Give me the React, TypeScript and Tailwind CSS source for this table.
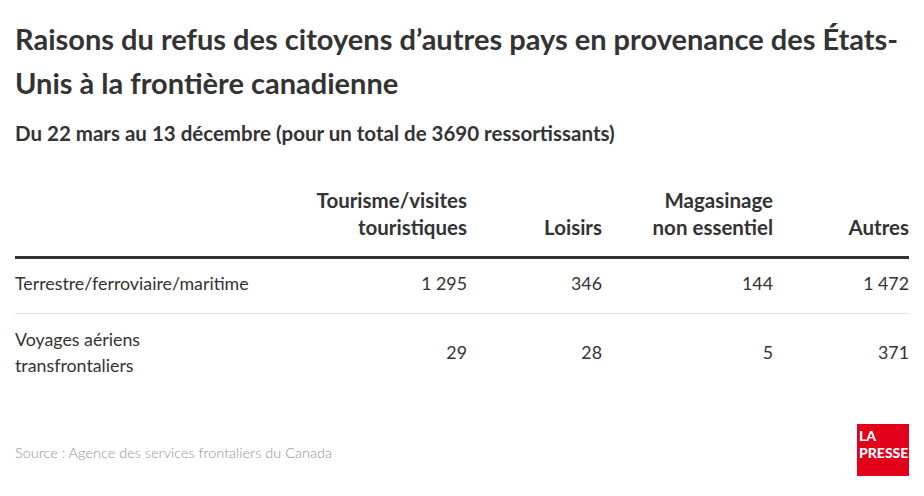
import React from "react";

const rows = [
  { label: ["Terrestre/ferroviaire/maritime"], values: ["1\u202F295", "346", "144", "1\u202F472"] },
  { label: ["Voyages aériens", "transfrontaliers"], values: ["29", "28", "5", "371"] },
];

const App: React.FC = () => {
  return (
    <div
      className="w-[924px] h-[496px] bg-white px-[15px] text-[#333]"
      style={{ fontFamily: "Lato, 'Noto Sans', sans-serif" }}
    >
      {/* Title */}
      <h1 className="pt-[17px] text-[29px] leading-[44px] font-bold text-[#333]">
        <span className="block whitespace-nowrap">
          Raisons du refus des citoyens d’autres pays en provenance des États-
        </span>
        <span className="block">Unis à la frontière canadienne</span>
      </h1>
      <p className="mt-[13px] text-[20.5px] leading-[30px] font-bold text-[#333]">
        Du 22 mars au 13 décembre (pour un total de 3690 ressortissants)
      </p>

      {/* Table */}
      <div className="mt-[39px] grid grid-cols-[1fr_190px_135px_171px_136px]">
        <div className="border-b-[3px] border-[#333]" />
        {["Tourisme/visites|touristiques", "Loisirs", "Magasinage|non essentiel", "Autres"].map((h) => (
          <div
            key={h}
            className="flex flex-col justify-end items-end pb-[15px] border-b-[3px] border-[#333] text-[20.5px] leading-[27px] font-bold text-right"
          >
            {h.split("|").map((l) => (
              <span key={l}>{l}</span>
            ))}
          </div>
        ))}

        {rows.map((r, idx) => (
          <React.Fragment key={idx}>
            <div
              className={`flex flex-col justify-center text-[17.8px] leading-[26px] ${
                idx === 0 ? "pt-[11px] pb-[17px] border-b border-[#e6e6e6]" : "pt-[12px] pb-[14px]"
              }`}
            >
              {r.label.map((l) => (
                <span key={l}>{l}</span>
              ))}
            </div>
            {r.values.map((v, i) => (
              <div
                key={i}
                className={`flex items-center justify-end text-[17.8px] leading-[26px] ${
                  idx === 0 ? "pt-[11px] pb-[17px] border-b border-[#e6e6e6]" : "pt-[12px] pb-[14px]"
                }`}
              >
                {v}
              </div>
            ))}
          </React.Fragment>
        ))}
      </div>

      {/* Footer */}
      <div className="mt-[32px] flex items-center justify-between">
        <span className="mt-[6px] text-[14.5px] leading-[20px] font-light text-[#939393]">
          Source : Agence des services frontaliers du Canada
        </span>
        <div className="w-[52px] h-[52px] bg-[#e2001a] flex flex-col pt-[3px] pl-[2px] text-white font-black text-[14px] leading-[17px]">
          <span>LA</span>
          <span>PRESSE</span>
        </div>
      </div>
    </div>
  );
};

export default App;
